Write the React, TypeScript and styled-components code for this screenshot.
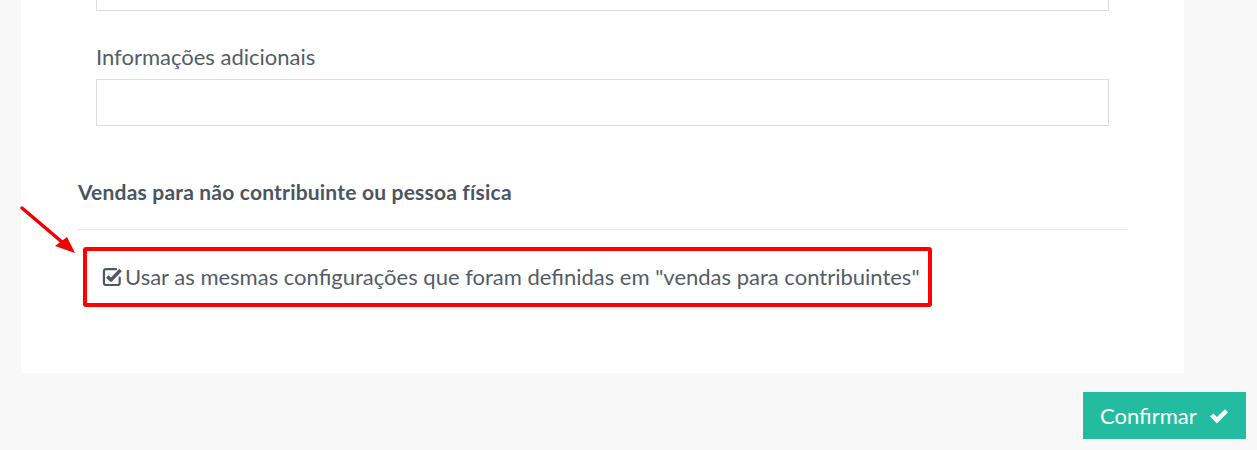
import React from "react";
import styled, { createGlobalStyle } from "styled-components";

const GlobalStyle = createGlobalStyle`
  html, body { margin: 0; padding: 0; background: #f8f8f8; }
  body { font-family: "Lato", "Open Sans", sans-serif; overflow: hidden; }
  * { box-sizing: border-box; }
`;

const Page = styled.div`
  position: relative;
  width: 1257px;
  height: 450px;
  overflow: hidden;
  background: #f8f8f8;
`;

const Panel = styled.section`
  margin: -40px 0 0 21px;
  width: 1163px;
  background: #ffffff;
  padding: 3px 56px 66px 57px;
`;

const FieldGroup = styled.div`
  padding: 0 19px 0 18px;
  display: flex;
  flex-direction: column;
`;

const Field = styled.div<{ $gap?: number }>`
  display: flex;
  flex-direction: column;
  margin-top: ${(p) => p.$gap ?? 0}px;
`;

const Label = styled.label`
  font-size: 22px;
  line-height: 30px;
  color: #535d68;
  margin-bottom: 7px;
`;

const Input = styled.div<{ $h: number }>`
  height: ${(p) => p.$h}px;
  border: 1px solid #dcdfe2;
  background: #fff;
`;

const SectionTitle = styled.h3`
  margin: 52px 0 0 0;
  font-size: 21px;
  line-height: 28px;
  letter-spacing: 0.2px;
  font-weight: 700;
  color: #4a5562;
  padding-bottom: 23px;
  border-bottom: 1px solid #ececec;
`;

const Highlight = styled.div`
  margin: 17px 0 0 5px;
  width: 849px;
  height: 60px;
  border: 4px solid #ff0000;
  border-radius: 3px;
  display: flex;
  align-items: center;
  padding: 0 10px 0 15px;
`;

const CheckLabel = styled.label`
  display: flex;
  align-items: center;
  gap: 2px;
  font-size: 22px;
  line-height: 28px;
  color: #535d68;
  white-space: nowrap;
`;

const Footer = styled.div`
  display: flex;
  justify-content: flex-end;
  padding: 19px 11px 0 0;
`;

const ConfirmButton = styled.button`
  display: flex;
  align-items: center;
  gap: 12px;
  height: 47px;
  width: 163px;
  padding: 0 17px;
  border: none;
  border-radius: 0;
  background: #23bca1;
  color: #ffffff;
  font-family: "Lato", "Open Sans", sans-serif;
  font-size: 22px;
  cursor: pointer;
`;

const Arrow = styled.svg`
  position: absolute;
  left: 0;
  top: 190px;
  pointer-events: none;
`;

const CheckSquareIcon = () => (
  <svg width="21" height="20" viewBox="0 0 21 20" aria-hidden="true">
    <path
      d="M14 2.2 H4.2 C2.9 2.2 1.9 3.2 1.9 4.5 V15.7 C1.9 17 2.9 18 4.2 18 H15.4 C16.7 18 17.7 17 17.7 15.7 V10.6"
      fill="none"
      stroke="#4f5965"
      strokeWidth="2.2"
      strokeLinecap="round"
    />
    <path
      d="M5.2 9.4 L9 13 L18.6 3"
      fill="none"
      stroke="#4f5965"
      strokeWidth="3.4"
      strokeLinejoin="round"
    />
  </svg>
);

const CheckIcon = () => (
  <svg width="22" height="18" viewBox="0 0 22 18" aria-hidden="true">
    <path d="M1.2 9.6 L4.6 6.2 L8.6 10.2 L17.2 1.6 L20.6 5 L8.6 17 Z" fill="#ffffff" />
  </svg>
);

export default function App() {
  return (
    <>
      <GlobalStyle />
      <Page>
        <Panel>
          <FieldGroup>
            <Field>
              <Input $h={48} />
            </Field>
            <Field $gap={31}>
              <Label>Informações adicionais</Label>
              <Input $h={47} />
            </Field>
          </FieldGroup>
          <SectionTitle>Vendas para não contribuinte ou pessoa física</SectionTitle>
          <Highlight>
            <CheckLabel>
              <CheckSquareIcon />
              Usar as mesmas configurações que foram definidas em "vendas para contribuintes"
            </CheckLabel>
          </Highlight>
        </Panel>
        <Footer>
          <ConfirmButton type="button">
            Confirmar
            <CheckIcon />
          </ConfirmButton>
        </Footer>
        <Arrow width="90" height="80" viewBox="0 0 90 80">
          <line x1="22" y1="18" x2="62" y2="52" stroke="#f00000" strokeWidth="3.5" strokeLinecap="round" />
          <polygon points="75,63 55,56 67,47" fill="#f00000" />
        </Arrow>
      </Page>
    </>
  );
}
